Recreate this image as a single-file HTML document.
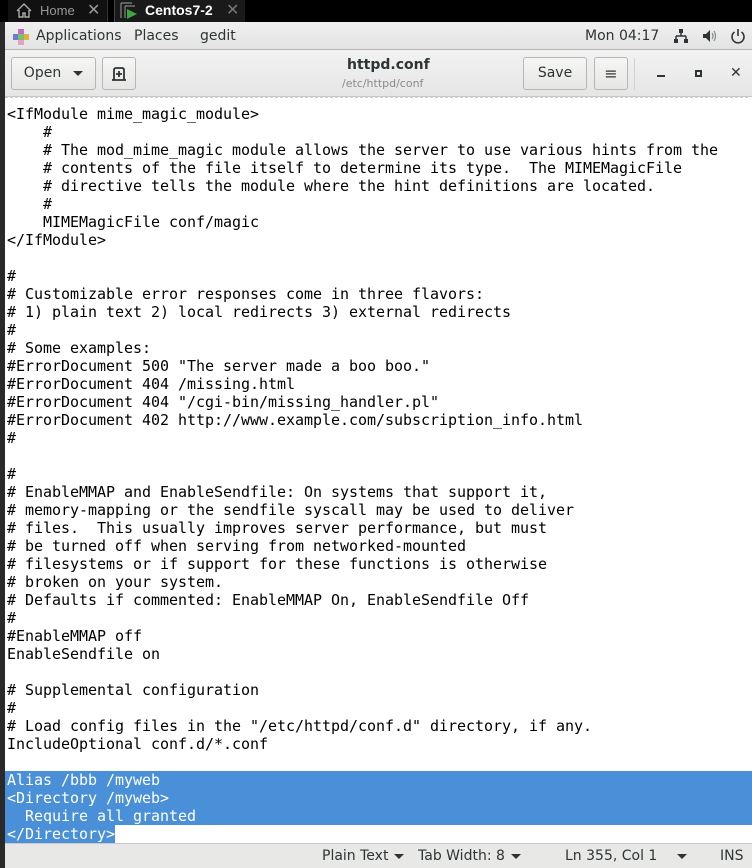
<!DOCTYPE html>
<html><head><meta charset="utf-8"><style>
*{margin:0;padding:0;box-sizing:border-box}
body{width:752px;height:868px;overflow:hidden;background:#fff;font-family:"DejaVu Sans","Liberation Sans",sans-serif;position:relative}
.abs{position:absolute}
#tabs{left:0;top:0;width:752px;height:22px;background:#000}
#lb{left:0;top:22px;width:5px;height:846px;background:#2a2a2a}
#panel{left:5px;top:22px;width:747px;height:28px;background:linear-gradient(#f0f0f0,#e3e3e3);border-bottom:1px solid #b5b5b5;font-size:14px;color:#2e3436}
#hb{left:5px;top:50px;width:747px;height:47px;background:linear-gradient(#f2f2f2,#e6e6e6);border-bottom:1px solid #c8c8c8}
.btn{position:absolute;top:7px;height:33px;border:1px solid #b6b6b3;border-radius:3px;background:linear-gradient(#f6f6f5,#e6e6e4);font-size:14px;color:#2e3436;text-align:center;line-height:31px}
#ed{left:5px;top:97px;width:743px;height:746px;background:#fff;border-top:1px dashed #ccc}
pre{position:absolute;left:2px;top:8px;font-family:"DejaVu Sans Mono","Liberation Mono",monospace;font-size:15px;line-height:18px;color:#000;letter-spacing:-0.03px}
#sel{left:5px;top:771px;width:747px;height:54px;background:#4a90d9}
#sel2{left:5px;top:825px;width:110px;height:18px;background:#4a90d9}
#sb{left:5px;top:843px;width:747px;height:25px;background:#e8e8e7;border-top:1px solid #c8c8c8;font-size:14px;color:#2e3436}
.ar{display:inline-block;width:0;height:0;border-left:5px solid transparent;border-right:5px solid transparent;border-top:5px solid #2e3436;vertical-align:middle;margin-left:6px}
</style></head><body>
<div id="tabs" class="abs">
 <div class="abs" style="left:8px;top:0;width:100px;height:22px;background:#111;border-right:1px solid #333"></div>
 <svg class="abs" style="left:16px;top:3px" width="16" height="15"><path d="M1 8 L8 1 L15 8 M3 7 V14 H7 V10 H9 V14 H13 V7" stroke="#aaa" stroke-width="1.4" fill="none"/></svg>
 <div class="abs" style="left:40px;top:3px;font-size:13px;color:#999;font-family:'Liberation Sans',sans-serif">Home</div>
 <div class="abs" style="left:87px;top:0px;font-size:16px;color:#999">✕</div>
 <div class="abs" style="left:114px;top:0;width:131px;height:22px;background:#1a1a1a;border-left:1px solid #444"></div>
 <svg class="abs" style="left:120px;top:2px" width="20" height="18"><path d="M1 1 V16 M1 1 H12" stroke="#888" stroke-width="1.2" fill="none"/><path d="M5 4 H15 M5 4 V16" stroke="#888" stroke-width="1.2" fill="none"/><path d="M7 7 L17 12 L7 17 Z" fill="#3ea63e"/></svg>
 <div class="abs" style="left:145px;top:2px;font-size:14px;font-weight:bold;color:#fff;font-family:'Liberation Sans',sans-serif">Centos7-2</div>
 <div class="abs" style="left:226px;top:0px;font-size:16px;color:#777">✕</div>
</div>
<div id="lb" class="abs"></div>
<div id="panel" class="abs">
 <svg class="abs" style="left:8px;top:7px" width="16" height="16"><rect x="5" y="0" width="6" height="6" fill="#c36bc3"/><rect x="0" y="5" width="6" height="6" fill="#6a7bd0"/><rect x="10" y="5" width="6" height="6" fill="#e0b24c"/><rect x="5" y="10" width="6" height="6" fill="#e3a3c3"/><rect x="5" y="5" width="6" height="6" fill="#7ac06a"/></svg>
 <div class="abs" style="left:31px;top:6px">Applications</div>
 <div class="abs" style="left:129px;top:6px">Places</div>
 <div class="abs" style="left:195px;top:6px">gedit</div>
 <div class="abs" style="left:580px;top:6px">Mon 04:17</div>
 <svg class="abs" style="left:668px;top:6px" width="16" height="16"><rect x="6" y="1" width="4" height="4" fill="#2e3436"/><path d="M8 5V8 M3 8H13 M3 8V11 M13 8V11" stroke="#2e3436" stroke-width="1.5"/><rect x="1" y="11" width="4" height="4" fill="#2e3436"/><rect x="11" y="11" width="4" height="4" fill="#2e3436"/></svg>
 <svg class="abs" style="left:697px;top:6px" width="16" height="16"><path d="M1 6H4L8 2V14L4 10H1Z" fill="#2e3436"/><path d="M10 5Q12 8 10 11 M12 3Q15 8 12 13" stroke="#888" stroke-width="1.2" fill="none"/></svg>
 <svg class="abs" style="left:725px;top:6px" width="16" height="16"><path d="M4.5 4A6 6 0 1 0 11.5 4" stroke="#2e3436" stroke-width="1.6" fill="none"/><path d="M8 1V8" stroke="#2e3436" stroke-width="1.6"/></svg>
</div>
<div id="hb" class="abs">
 <div class="btn" style="left:6px;width:85px">Open<span class="ar" style="margin-left:12px"></span></div>
 <div class="btn" style="left:97px;width:34px"><svg style="margin-top:8px" width="16" height="16"><path d="M3 14V4Q3 2 5 2H11Q13 2 13 4V14" stroke="#2e3436" stroke-width="1.8" fill="none"/><path d="M1 14H15M8 5V11M5 8H11" stroke="#2e3436" stroke-width="1.8"/></svg></div>
 <div class="abs" style="left:342px;top:7px;font-size:14px;font-weight:bold;color:#2e3436">httpd.conf</div>
 <div class="abs" style="left:337px;top:27px;font-size:11px;color:#8a8a8a">/etc/httpd/conf</div>
 <div class="btn" style="left:518px;width:64px">Save</div>
 <div class="btn" style="left:589px;width:34px;font-size:16px">≡</div>
 <div class="abs" style="left:629px;top:8px;width:1px;height:32px;background:#d0d0d0"></div>
 <div class="abs" style="left:652px;top:25px;width:8px;height:2px;background:#2e3436"></div>
 <div class="abs" style="left:690px;top:20px;width:7px;height:7px;border:2px solid #2e3436"></div>
 <div class="abs" style="left:725px;top:15px;font-size:14px;font-weight:bold;color:#2e3436">✕</div>
</div>
<div id="ed" class="abs"></div>
<div id="sel" class="abs"></div>
<div id="sel2" class="abs"></div>
<pre class="abs" style="left:7px;top:105px">&lt;IfModule mime_magic_module&gt;
    #
    # The mod_mime_magic module allows the server to use various hints from the
    # contents of the file itself to determine its type.  The MIMEMagicFile
    # directive tells the module where the hint definitions are located.
    #
    MIMEMagicFile conf/magic
&lt;/IfModule&gt;

#
# Customizable error responses come in three flavors:
# 1) plain text 2) local redirects 3) external redirects
#
# Some examples:
#ErrorDocument 500 "The server made a boo boo."
#ErrorDocument 404 /missing.html
#ErrorDocument 404 "/cgi-bin/missing_handler.pl"
#ErrorDocument 402 http://www.example.com/subscription_info.html
#

#
# EnableMMAP and EnableSendfile: On systems that support it,
# memory-mapping or the sendfile syscall may be used to deliver
# files.  This usually improves server performance, but must
# be turned off when serving from networked-mounted
# filesystems or if support for these functions is otherwise
# broken on your system.
# Defaults if commented: EnableMMAP On, EnableSendfile Off
#
#EnableMMAP off
EnableSendfile on

# Supplemental configuration
#
# Load config files in the "/etc/httpd/conf.d" directory, if any.
IncludeOptional conf.d/*.conf

<span style="color:#fff">Alias /bbb /myweb
&lt;Directory /myweb&gt;
  Require all granted
&lt;/Directory&gt;</span></pre>
<div id="sb" class="abs">
 <div class="abs" style="left:317px;top:4px">Plain Text<span class="ar"></span></div>
 <div class="abs" style="left:413px;top:4px">Tab Width: 8<span class="ar"></span></div>
 <div class="abs" style="left:560px;top:4px">Ln 355, Col 1</div>
 <div class="abs" style="left:666px;top:4px"><span class="ar"></span></div>
 <div class="abs" style="left:715px;top:4px">INS</div>
</div>
</body></html>
